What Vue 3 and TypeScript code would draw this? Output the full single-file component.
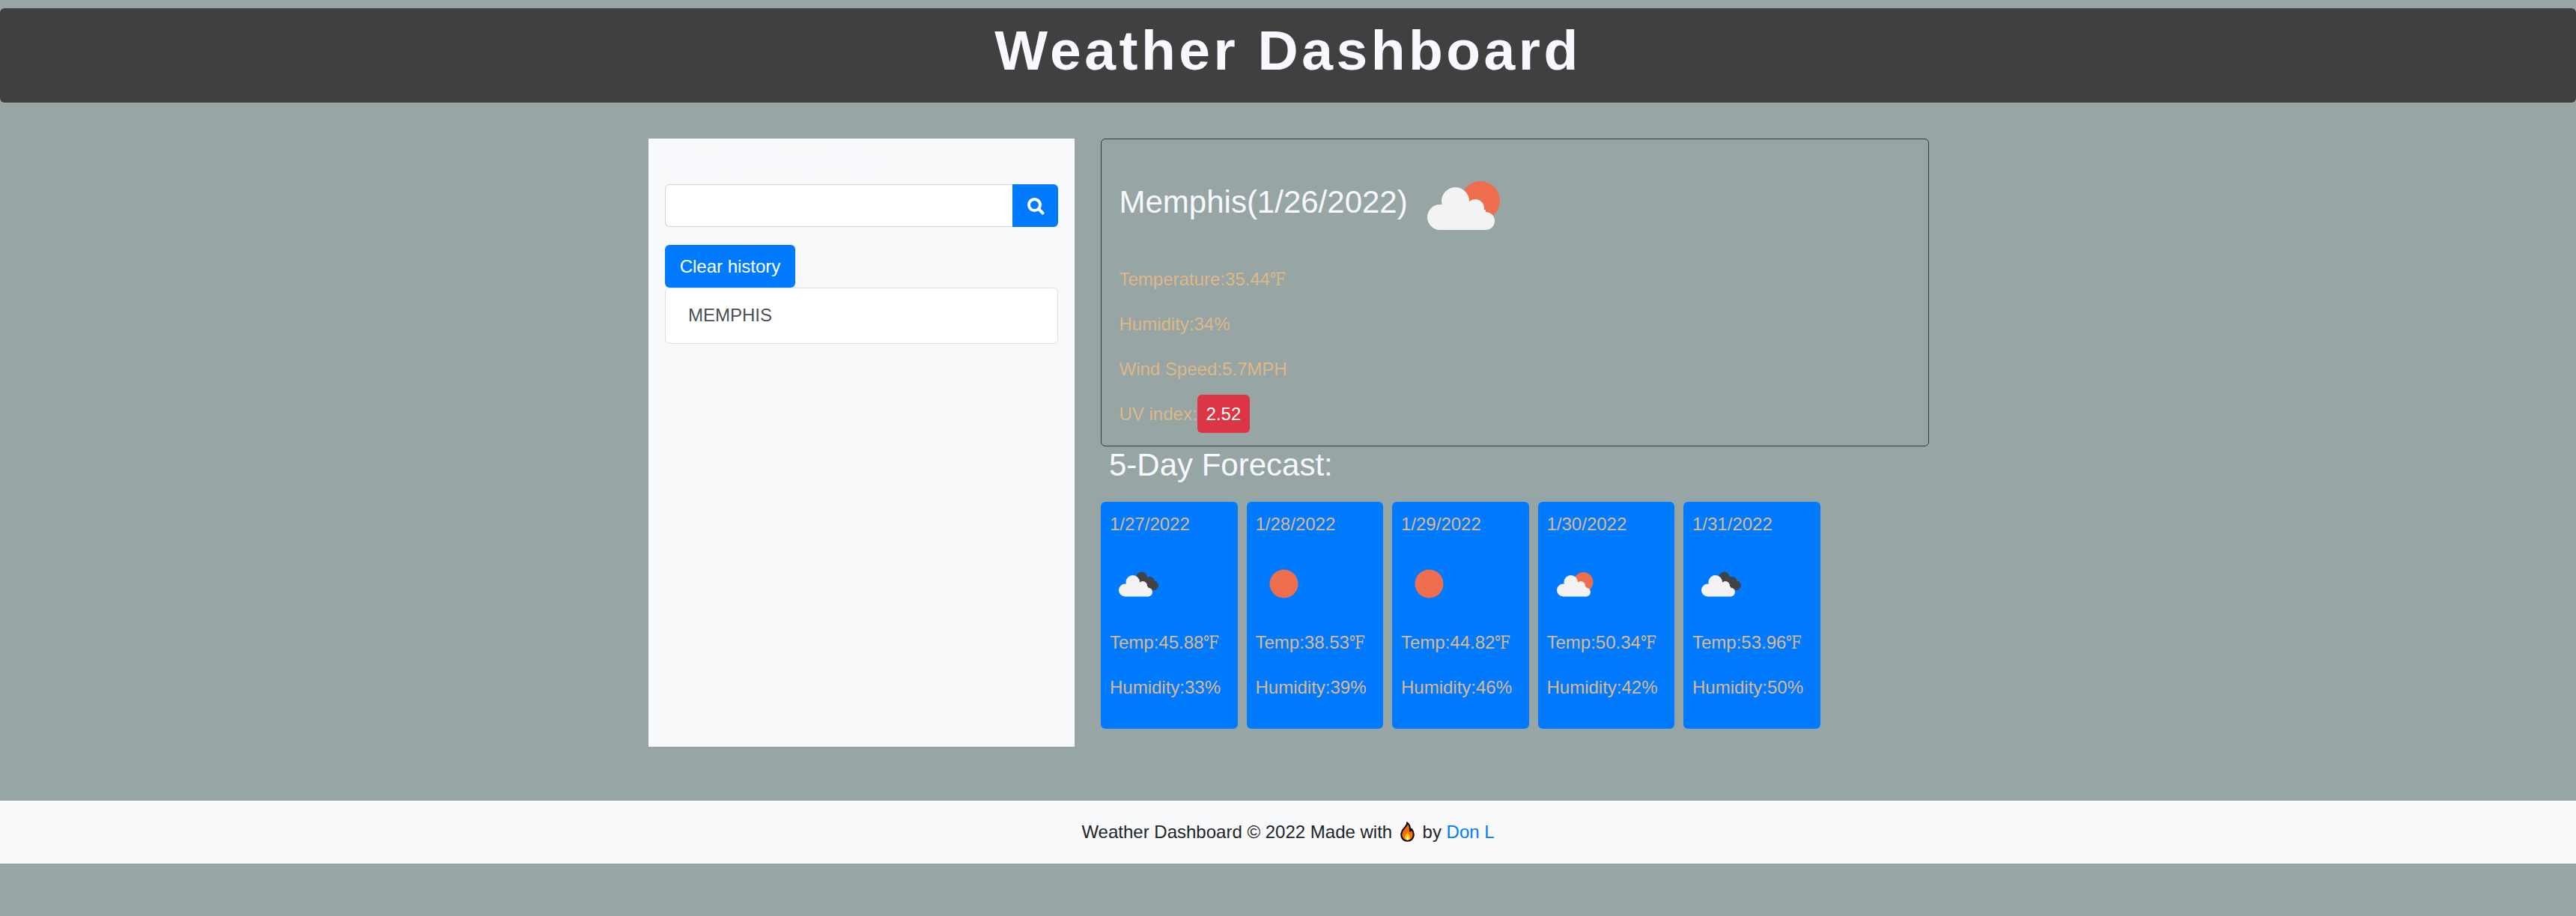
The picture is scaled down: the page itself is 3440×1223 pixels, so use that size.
<template>
  <div class="page">
    <header class="title-bar">
      <h1>Weather Dashboard</h1>
    </header>

    <div class="layout">
      <aside class="sidebar">
        <h4 class="search-label">Search for a City:</h4>
        <form class="search" @submit.prevent>
          <input v-model="city" class="search-input" type="text" />
          <button class="search-btn" type="submit" aria-label="Search">
            <svg viewBox="0 0 24 24" width="24" height="24" fill="none" stroke="#fff" stroke-linecap="round">
              <circle cx="10.500" cy="10.500" r="7.500" stroke-width="4" />
              <path d="M16.500 16.500 21.500 21.500" stroke-width="4" />
            </svg>
          </button>
        </form>
        <button class="clear-btn" type="button">Clear history</button>
        <ul class="history">
          <li>MEMPHIS</li>
        </ul>
      </aside>

      <main class="content">
        <section class="today">
          <h3>
            Memphis(1/26/2022)<svg class="today-icon" viewBox="0 0 150 150">
              <use href="#sun-partly" />
            </svg>
          </h3>
          <p>Temperature:35.44<span class="unit">℉</span></p>
          <p>Humidity:34%</p>
          <p>Wind Speed:5.7MPH</p>
          <p>UV index:<span class="uv">2.52</span></p>
        </section>

        <h3 class="forecast-title">5-Day Forecast:</h3>
        <div class="forecast">
          <article v-for="day in days" :key="day.date" class="day">
            <p>{{ day.date }}</p>
            <svg class="day-icon" viewBox="0 0 150 150">
              <use :href="'#' + day.icon" />
            </svg>
            <p>Temp:{{ day.temp }}<span class="unit">℉</span></p>
            <p>Humidity:{{ day.humidity }}%</p>
          </article>
        </div>
      </main>
    </div>

    <footer class="site-footer">
      Weather Dashboard © 2022 Made with
      <svg class="flame" viewBox="0 0 19 27">
        <path d="M9 1.200c.6 2.400-.2 3.600-2.600 6.200C3.400 10.600 1.200 13.400 1.200 17.600c0 4.800 3.600 8.200 8.300 8.200s8.300-3.400 8.300-8.300c0-3-1.100-5.500-2.700-7.700-.3 1.400-.9 2.300-2 2.800C13.300 8 12.300 3.500 9 1.200Z" fill="#f76a0c" stroke="#000" stroke-width="2" stroke-linejoin="round" />
        <path d="M9.500 14c-.4 2-3.700 3.800-3.700 7 0 2.300 1.700 3.700 3.800 3.700s3.700-1.500 3.700-3.700c0-3-3.300-4.600-3.800-7Z" fill="#ffc107" />
        <path d="M9.500 19.500c-.6 1.200-1.600 1.900-1.600 3.100 0 1.100.7 1.900 1.700 1.900s1.600-.8 1.600-1.900c0-1.200-1.200-1.900-1.700-3.100Z" fill="#fff3a0" />
      </svg>
      by <a href="#">Don L</a>
    </footer>

    <!-- weather icons, reused by the cards -->
    <svg class="defs" width="0" height="0">
      <defs>
        <g id="cloud" fill="#f3f3f3">
          <circle cx="43" cy="92" r="17" />
          <circle cx="63.500" cy="70.500" r="18.500" />
          <circle cx="90" cy="80" r="12" />
          <circle cx="104" cy="97" r="12" />
          <rect x="43" y="82" width="61" height="27" />
        </g>
        <circle id="sun" cx="75" cy="75" r="38" fill="#ee6e4e" />
        <g id="sun-partly">
          <circle cx="97" cy="70" r="26" fill="#ee6e4e" />
          <use href="#cloud" />
        </g>
        <g id="dark-partly">
          <circle cx="85" cy="57" r="14" fill="#434343" />
          <circle cx="107" cy="68" r="12" fill="#434343" />
          <circle cx="117" cy="79" r="13" fill="#434343" />
          <path d="M85 60 117 82" stroke="#434343" stroke-width="24" />
          <use href="#cloud" x="-2" />
        </g>
      </defs>
    </svg>
  </div>
</template>

<script setup lang="ts">
import { ref } from 'vue'

interface ForecastDay {
  date: string
  icon: 'sun' | 'sun-partly' | 'dark-partly'
  temp: string
  humidity: number
}

const city = ref('')

const days: ForecastDay[] = [
  { date: '1/27/2022', icon: 'dark-partly', temp: '45.88', humidity: 33 },
  { date: '1/28/2022', icon: 'sun', temp: '38.53', humidity: 39 },
  { date: '1/29/2022', icon: 'sun', temp: '44.82', humidity: 46 },
  { date: '1/30/2022', icon: 'sun-partly', temp: '50.34', humidity: 42 },
  { date: '1/31/2022', icon: 'dark-partly', temp: '53.96', humidity: 50 }
]
</script>

<style>
html,
body {
  background: #97a5a4;
}
</style>

<style scoped>
.page {
  min-height: 1223px;
  box-sizing: border-box;
  padding-top: 11px;
  background: #97a5a4;
  font-family: "Liberation Sans", Arial, sans-serif;
  font-size: 24px;
  line-height: 36px;
}

.title-bar {
  height: 126px;
  box-sizing: border-box;
  padding-top: 13px;
  border-radius: 6px;
  background: #404040;
  text-align: center;
}

.title-bar h1 {
  margin: 0;
  color: #f8f8ff;
  font-size: 75px;
  font-weight: 700;
  letter-spacing: 4.500px;
  line-height: 86px;
}

.layout {
  display: flex;
  gap: 35px;
  width: 1710px;
  margin: 48px 0 72px 866px;
}

.sidebar {
  width: 569px;
  box-sizing: border-box;
  padding: 7px 22px 0;
  background: #f8f9fa;
}

.search-label {
  margin: 0 0 11px;
  color: #f8f8ff;
  font-size: 36px;
  font-weight: 700;
  line-height: 43px;
}

.search {
  display: flex;
  height: 57px;
  margin: 0 0 24px;
}

.search-input {
  flex: 1;
  min-width: 0;
  box-sizing: border-box;
  border: 1px solid #ced4da;
  border-right: 0;
  border-radius: 6px 0 0 6px;
  background: #fff;
}

.search-btn {
  width: 61px;
  padding: 0;
  border: 0;
  border-radius: 0 6px 6px 0;
  background: #007bff;
  display: flex;
  align-items: center;
  justify-content: center;
}

.clear-btn {
  display: block;
  width: 174px;
  height: 57px;
  padding: 0;
  border: 0;
  border-radius: 6px;
  background: #007bff;
  color: #fff;
  font: inherit;
}

.history {
  margin: 0;
  padding: 0;
  list-style: none;
}

.history li {
  box-sizing: border-box;
  height: 75px;
  padding: 18px 30px;
  border: 1px solid #dfdfdf;
  border-radius: 6px;
  background: #fff;
  color: #495057;
}

.content {
  width: 1106px;
  padding-bottom: 24px;
}

.today {
  height: 411px;
  box-sizing: border-box;
  padding: 12px 23.500px 0;
  border: 1px solid #343a40;
  border-radius: 6px;
  color: #deb887;
}

.today h3 {
  margin: 0 0 7px;
  color: #f8f8ff;
  font-size: 42px;
  font-weight: 400;
  line-height: 50px;
}

.today-icon {
  width: 150px;
  height: 150px;
  vertical-align: middle;
}

.today p,
.day p {
  margin: 0 0 24px;
}

/* the fallback glyph is too wide, squeeze it to the reference width */
.unit {
  display: inline-block;
  width: 20px;
  font-family: "Liberation Serif", "DejaVu Serif", serif;
  transform: scaleX(0.82);
  transform-origin: left center;
}

.uv {
  padding: 12px;
  border-radius: 6px;
  background: #dc3545;
  color: #fff;
}

.forecast-title {
  margin: 0;
  padding-left: 11px;
  height: 74px;
  color: #f8f8ff;
  font-size: 42px;
  font-weight: 400;
  line-height: 50px;
}

.forecast {
  display: flex;
  gap: 12px;
}

.day {
  width: 182.500px;
  height: 303px;
  box-sizing: border-box;
  padding: 12px 12px 0;
  border-radius: 6px;
  background: #007bff;
  color: #deb887;
}

.day-icon {
  display: block;
  width: 75px;
  height: 75px;
  margin-bottom: 23px;
}

.defs {
  position: absolute;
}

.site-footer {
  height: 84px;
  box-sizing: border-box;
  padding: 24px;
  background: #f8f9fa;
  color: #212529;
  text-align: center;
}

.site-footer a {
  color: #007bff;
  text-decoration: none;
}

.flame {
  width: 19px;
  height: 27px;
  margin: 0 4px;
  vertical-align: -5px;
}
</style>
